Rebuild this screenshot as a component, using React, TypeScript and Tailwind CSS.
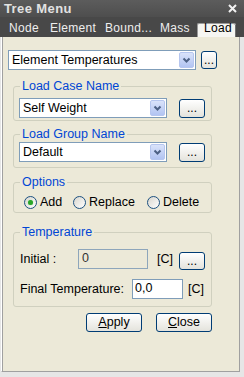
import React from "react";

const Chevron = () => (
  <svg width="9" height="7" viewBox="0 0 9 7">
    <polyline points="1.5,1.5 4.5,4.5 7.5,1.5" fill="none" stroke="#4d6185" strokeWidth="2" />
  </svg>
);

function Combo({ cls, text }: { cls: string; text: string }) {
  return (
    <div className={`flex items-center h-[20px] border border-[#7f9db9] bg-white ${cls}`}>
      <span className="flex-1 pl-[3px] text-[12.5px] leading-[18px] text-black whitespace-nowrap overflow-hidden">
        {text}
      </span>
      <div className="mr-[1px] w-[15px] h-[16px] rounded-[2px] border border-[#b6c6ef] bg-gradient-to-b from-[#dae3fa] to-[#b2c4f2] flex items-center justify-center">
        <Chevron />
      </div>
    </div>
  );
}

function Dots({ cls }: { cls: string }) {
  return (
    <div
      className={`flex items-center justify-center border border-[#003c74] rounded-[3px] bg-gradient-to-b from-white to-[#e4e3dc] text-[12px] leading-none text-black ${cls}`}
    >
      ...
    </div>
  );
}

function Radio({ checked, label, cls }: { checked?: boolean; label: string; cls: string }) {
  return (
    <div className={`flex items-center ${cls}`}>
      <span className="w-[13px] h-[13px] rounded-full border border-[#1c5180] bg-gradient-to-br from-[#d8d6ce] to-white flex items-center justify-center">
        {checked && <span className="w-[5px] h-[5px] rounded-full bg-[#2aa52a] shadow-[0_0_1px_#7ddc7d]" />}
      </span>
      <span className="ml-[3px] text-[12.5px] leading-[14px] text-black">{label}</span>
    </div>
  );
}

function Legend({ text }: { text: string }) {
  return (
    <legend className="ml-[1px] px-[2px] text-[12.5px] leading-[13px] text-[#0046d5]">{text}</legend>
  );
}

export default function App() {
  return (
    <div className="w-[244px] h-[377px] flex flex-col bg-[#ece9d8] font-['Liberation_Sans',Arial,sans-serif] overflow-hidden">
      {/* Title bar */}
      <div className="h-[17px] shrink-0 flex items-center justify-between bg-gradient-to-b from-[#5c5c5c] to-[#4e4e4e]">
        <span className="ml-[4px] text-[13px] leading-[15px] font-bold text-[#e2e2e2] tracking-[0.4px]">Tree Menu</span>
        <svg width="9" height="9" viewBox="0 0 9 9" className="mr-[7px]">
          <path d="M1 1 L8 8 M8 1 L1 8" stroke="#f2f2f2" strokeWidth="2" />
        </svg>
      </div>
      {/* Tabs */}
      <div className="h-[20px] shrink-0 flex items-start bg-[#484848] text-[12px] text-[#eeeeee]">
        <span className="shrink-0 w-[41px] pl-[9px] mt-[4px] leading-[14px] tracking-[0.3px]">Node</span>
        <span className="shrink-0 w-[55px] pl-[9px] mt-[4px] leading-[14px] tracking-[0.3px]">Element</span>
        <span className="shrink-0 w-[55px] pl-[9px] mt-[4px] leading-[14px] tracking-[0.3px]">Bound...</span>
        <span className="shrink-0 w-[46px] pl-[9px] mt-[4px] leading-[14px] tracking-[0.3px]">Mass</span>
        <div className="shrink-0 w-[39px] h-[14px] mt-[6px] pl-[6px] bg-[#f6f6f2] rounded-t-[2px] border-t border-l border-[#9a9a9a] shadow-[inset_-1px_0_0_#707070] text-black leading-[9px] tracking-[0.3px]">
          Load
        </div>
      </div>
      {/* Body */}
      <div className="flex-1 flex flex-col bg-[#e6e6e6] pl-[1px] pr-[4px] pb-[5px]">
        <div className="flex-1 flex flex-col bg-[#ece9d8] border-l border-l-white border-r border-r-[#a0a0a0] border-b border-b-[#a0a0a0] shadow-[inset_1px_0_0_#a0a0a0]">
          {/* main combo */}
          <div className="flex items-center mt-[13px] ml-[6px]">
            <Combo cls="w-[188px]" text="Element Temperatures" />
            <Dots cls="ml-[5px] w-[16px] h-[18px]" />
          </div>

          {/* Load Case Name */}
          <fieldset className="mt-[10px] ml-[11px] w-[199px] border border-[#d0d0bf] rounded-[3px] pl-[5px] pt-[5px] pb-[2px]">
            <Legend text="Load Case Name" />
            <div className="flex items-center">
              <Combo cls="w-[148px]" text="Self Weight" />
              <Dots cls="ml-[12px] w-[26px] h-[19px]" />
            </div>
          </fieldset>

          {/* Load Group Name */}
          <fieldset className="mt-[7px] ml-[11px] w-[199px] border border-[#d0d0bf] rounded-[3px] pl-[5px] pt-[1px] pb-[5px]">
            <Legend text="Load Group Name" />
            <div className="flex items-center">
              <Combo cls="w-[148px]" text="Default" />
              <Dots cls="ml-[12px] w-[26px] h-[19px]" />
            </div>
          </fieldset>

          {/* Options */}
          <fieldset className="mt-[8px] ml-[11px] w-[199px] border border-[#d0d0bf] rounded-[3px] pl-[5px] pt-[6px] pb-[3px]">
            <Legend text="Options" />
            <div className="flex items-center h-[14px]">
              <Radio checked label="Add" cls="ml-[5px] w-[49px]" />
              <Radio label="Replace" cls="w-[74px]" />
              <Radio label="Delete" cls="" />
            </div>
          </fieldset>

          {/* Temperature */}
          <fieldset className="mt-[13px] ml-[11px] w-[199px] border border-[#d0d0bf] rounded-[3px] pl-[5px] pt-[10px] pb-[7px]">
            <Legend text="Temperature" />
            <div className="flex items-start h-[20px] text-[12.5px] text-black">
              <span className="w-[59px] pl-[1px] leading-[20px]">Initial :</span>
              <div className="w-[70px] h-[20px] border border-[#8ea6bb] bg-[#ece9d8] pl-[3px] leading-[16px] text-[#333]">0</div>
              <span className="ml-[9px] w-[22px] leading-[20px]">[C]</span>
              <Dots cls="mt-[3px] w-[26px] h-[18px]" />
            </div>
            <div className="flex items-center h-[20px] mt-[10px] text-[12.5px] text-black">
              <span className="w-[113px] pl-[1px] leading-[20px]">Final Temperature:</span>
              <div className="w-[51px] h-[20px] border border-[#7f9db9] bg-white pl-[2px] leading-[16px]">0,0</div>
              <span className="ml-[5px] leading-[20px]">[C]</span>
            </div>
          </fieldset>

          {/* Buttons */}
          <div className="flex mt-[6px] ml-[84px] text-[12.5px] text-black">
            <button className="w-[56px] h-[19px] border border-[#003c74] rounded-[3px] bg-gradient-to-b from-white to-[#e4e3dc] leading-[17px]">
              <span className="underline underline-offset-1">A</span>pply
            </button>
            <button className="ml-[14px] w-[56px] h-[19px] border border-[#003c74] rounded-[3px] bg-gradient-to-b from-white to-[#e4e3dc] leading-[17px]">
              <span className="underline underline-offset-1">C</span>lose
            </button>
          </div>
        </div>
      </div>
    </div>
  );
}
